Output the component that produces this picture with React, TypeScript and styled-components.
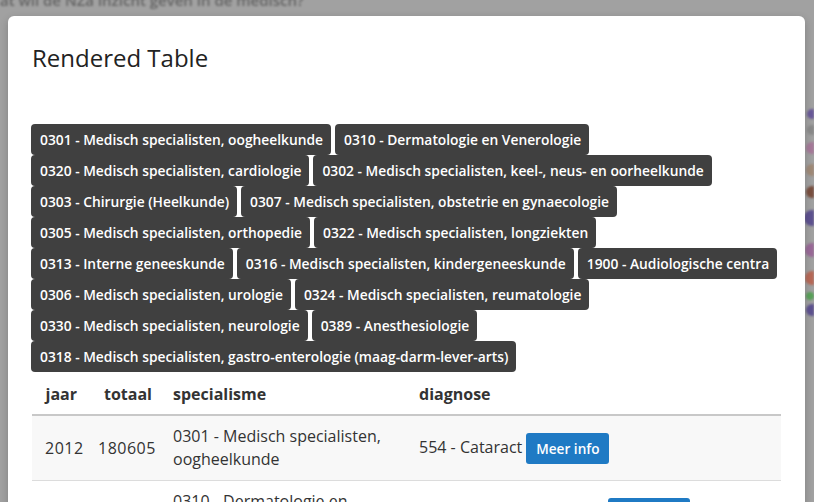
import React from "react";
import styled, { createGlobalStyle } from "styled-components";

const Global = createGlobalStyle`
  html, body { margin: 0; padding: 0; }
  body { font-family: "Open Sans", "Noto Sans", sans-serif; background: #a1a1a1; }
  * { box-sizing: border-box; }
`;

const Page = styled.div`
  position: relative;
  width: 814px;
  height: 502px;
  overflow: hidden;
  background: #a1a1a1;
`;

const BackText = styled.div`
  font-size: 15px;
  font-weight: 600;
  color: #4a4a4a;
  filter: blur(1.2px);
  padding: 0;
  margin-top: -10px;
  white-space: nowrap;
  opacity: 0.7;
`;

const SideArt = styled.svg`
  position: absolute;
  right: 0;
  top: 100px;
  filter: blur(1px);
`;

const Modal = styled.div`
  position: absolute;
  left: 8px;
  top: 16px;
  width: 797px;
  height: 520px;
  background: #fff;
  border-radius: 6px;
  box-shadow: 0 3px 9px rgba(0, 0, 0, 0.2);
  padding: 22px 24px 0 23px;
`;

const Title = styled.h4`
  margin: 0 0 0 1px;
  font-size: 24px;
  font-weight: 400;
  color: #222;
  line-height: 40px;
`;

const Tags = styled.div`
  display: flex;
  flex-wrap: wrap;
  column-gap: 4px;
  row-gap: 0;
  margin-top: 46px;
  width: 752px;
`;

const Tag = styled.span`
  display: inline-block;
  background: #404040;
  color: #fff;
  font-size: 13.8px;
  font-weight: 600;
  line-height: 19px;
  padding: 6px 8px 6px 9px;
  border-radius: 4px;
  white-space: nowrap;
`;

const Table = styled.table`
  margin-left: 1px;
  width: 749px;
  border-collapse: collapse;
  table-layout: fixed;
  font-size: 16px;
  color: #333;
`;

const Th = styled.th<{ $right?: boolean }>`
  text-align: ${(p) => (p.$right ? "right" : "left")};
  font-weight: 700;
  padding: 11px 8px 9px 13px;
  line-height: 22px;
  border-bottom: 2px solid #c8c8c8;
  color: #333;
`;

const Row = styled.tr<{ $striped?: boolean }>`
  background: ${(p) => (p.$striped ? "#f8f8f8" : "#fff")};
`;

const Td = styled.td<{ $right?: boolean }>`
  text-align: ${(p) => (p.$right ? "right" : "left")};
  vertical-align: middle;
  padding: 9px 8px 9px 13px;
  line-height: 23px;
  border-bottom: 1px solid #dcdcdc;
`;

const Num = styled.span`
  letter-spacing: 0.5px;
`;

const Button = styled.button`
  display: inline-block;
  vertical-align: middle;
  margin-left: 4px;
  background: #1f7ac4;
  color: #fff;
  border: none;
  border-radius: 3px;
  font-family: "Open Sans", sans-serif;
  font-size: 13.6px;
  font-weight: 600;
  line-height: 19px;
  padding: 6px 9px 6px 10px;
`;

const tags = [
  "0301 - Medisch specialisten, oogheelkunde",
  "0310 - Dermatologie en Venerologie",
  "0320 - Medisch specialisten, cardiologie",
  "0302 - Medisch specialisten, keel-, neus- en oorheelkunde",
  "0303 - Chirurgie (Heelkunde)",
  "0307 - Medisch specialisten, obstetrie en gynaecologie",
  "0305 - Medisch specialisten, orthopedie",
  "0322 - Medisch specialisten, longziekten",
  "0313 - Interne geneeskunde",
  "0316 - Medisch specialisten, kindergeneeskunde",
  "1900 - Audiologische centra",
  "0306 - Medisch specialisten, urologie",
  "0324 - Medisch specialisten, reumatologie",
  "0330 - Medisch specialisten, neurologie",
  "0389 - Anesthesiologie",
  "0318 - Medisch specialisten, gastro-enterologie (maag-darm-lever-arts)",
];

const rows = [
  { jaar: "2012", totaal: "180605", spec: "0301 - Medisch specialisten, oogheelkunde", diag: "554 - Cataract" },
  { jaar: "2012", totaal: "170234", spec: "0310 - Dermatologie en Venerologie", diag: "1 - Dermatitis en eczeem" },
];

export default function App() {
  return (
    <Page>
      <Global />
      <BackText>at wil de NZa inzicht geven in de medisch?</BackText>
      <SideArt width="10" height="260" viewBox="0 0 10 260">
        <circle cx="8" cy="14" r="5" fill="#6a5a9a" />
        <circle cx="8" cy="30" r="5" fill="#8a8a8a" />
        <circle cx="8" cy="48" r="6" fill="#a67a9a" />
        <circle cx="8" cy="70" r="6" fill="#a08a78" />
        <circle cx="8" cy="92" r="6" fill="#7a5040" />
        <circle cx="8" cy="118" r="8" fill="#5e5290" />
        <circle cx="8" cy="150" r="7" fill="#9a6a98" />
        <circle cx="8" cy="178" r="7" fill="#b86a58" />
        <circle cx="6" cy="196" r="4" fill="#5aa25a" />
        <circle cx="8" cy="210" r="6" fill="#5e5290" />
      </SideArt>
      <Modal>
        <Title>Rendered Table</Title>
        <Tags>
          {tags.map((t) => (
            <Tag key={t}>{t}</Tag>
          ))}
        </Tags>
        <Table>
          <colgroup>
            <col style={{ width: 53 }} />
            <col style={{ width: 75 }} />
            <col style={{ width: 246 }} />
            <col />
          </colgroup>
          <thead>
            <tr>
              <Th $right>jaar</Th>
              <Th $right>totaal</Th>
              <Th>specialisme</Th>
              <Th>diagnose</Th>
            </tr>
          </thead>
          <tbody>
            {rows.map((r, i) => (
              <Row key={i} $striped={i % 2 === 0}>
                <Td $right><Num>{r.jaar}</Num></Td>
                <Td $right><Num>{r.totaal}</Num></Td>
                <Td>{r.spec}</Td>
                <Td>
                  {r.diag}
                  <Button>Meer info</Button>
                </Td>
              </Row>
            ))}
          </tbody>
        </Table>
      </Modal>
    </Page>
  );
}
